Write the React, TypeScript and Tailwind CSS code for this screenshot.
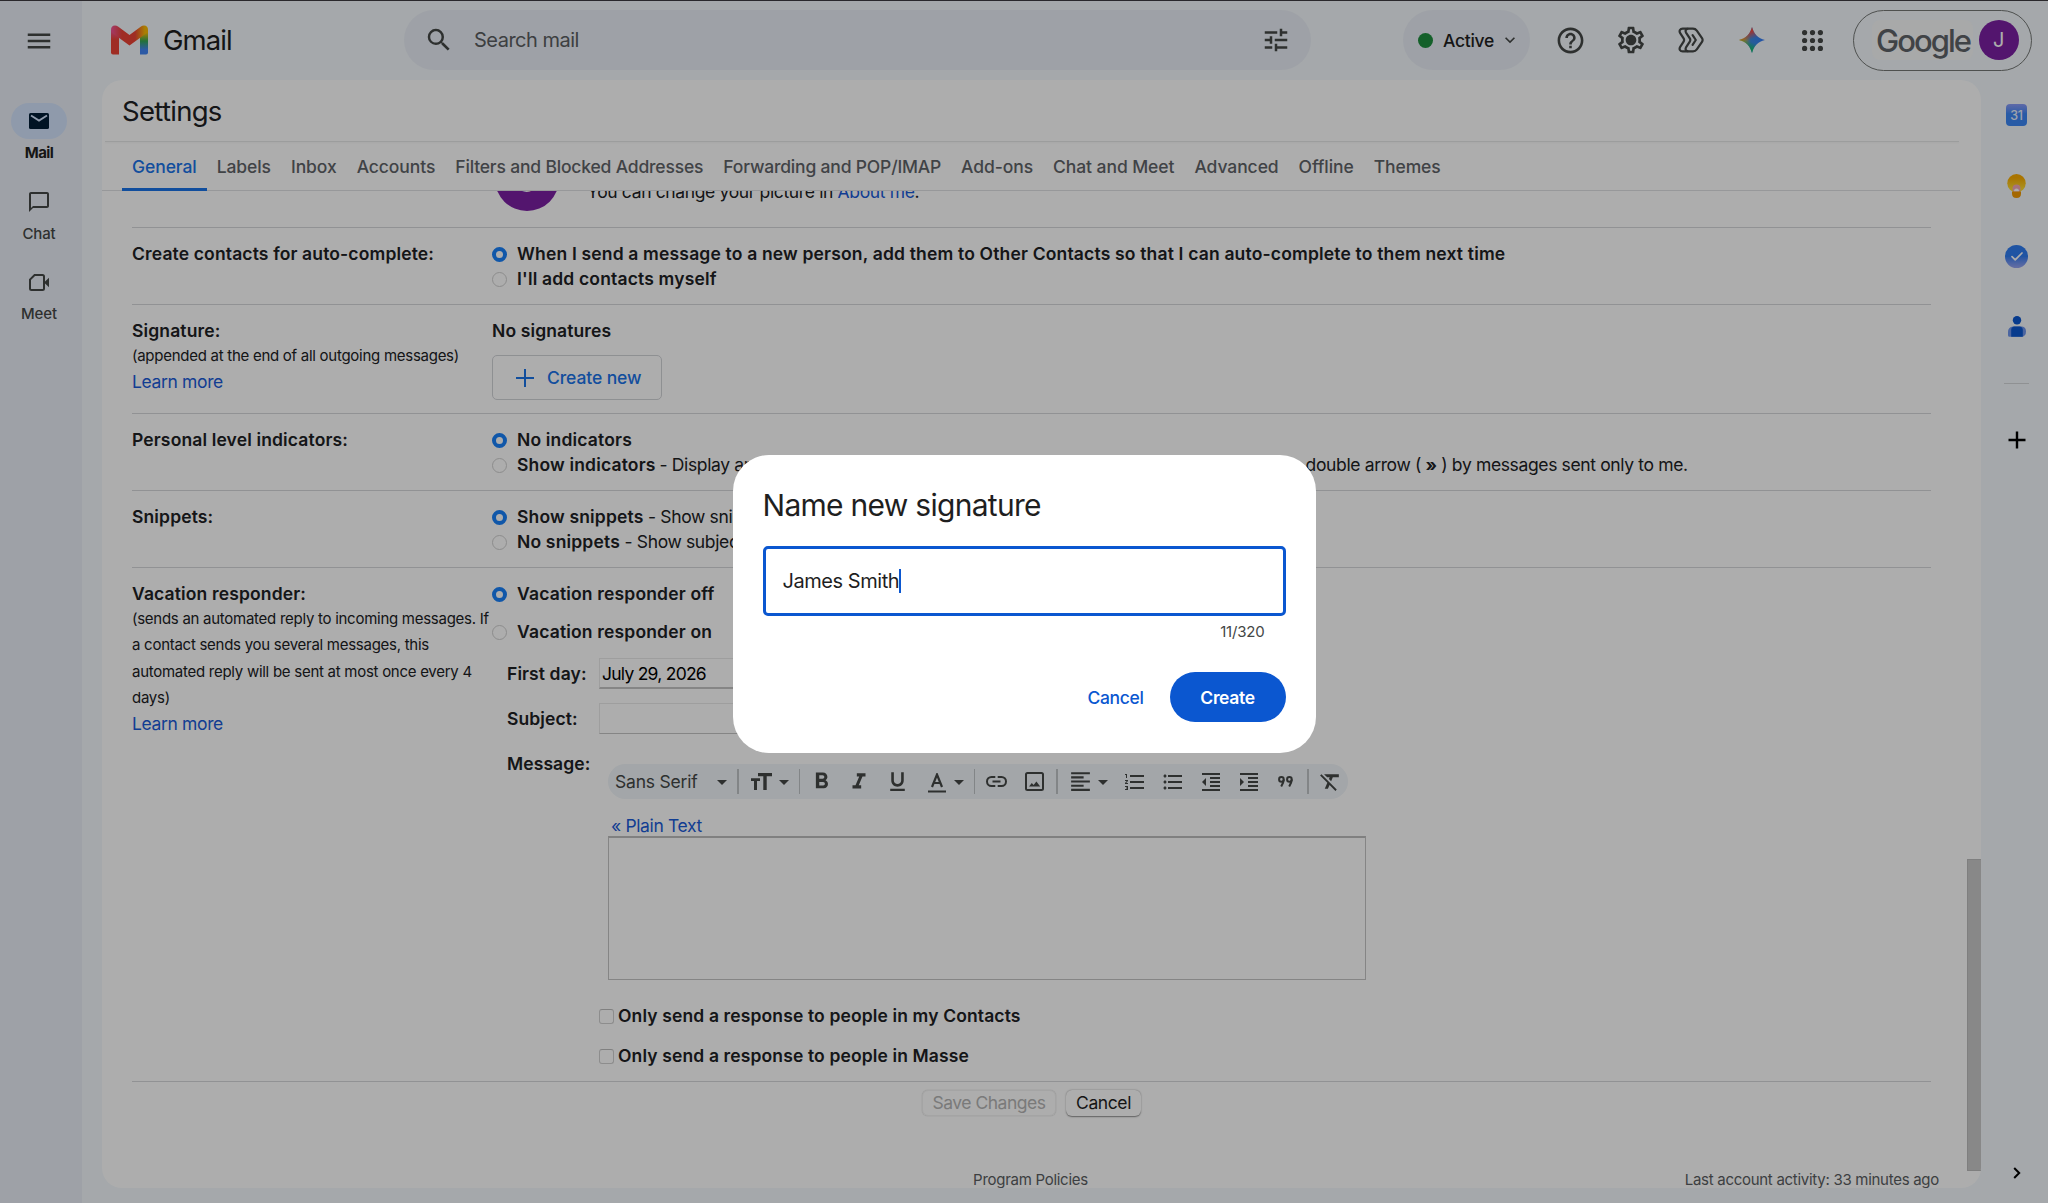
import type { ReactNode } from 'react';
import {
  MdArrowDropDown,
  MdChatBubbleOutline,
  MdFormatAlignLeft,
  MdFormatBold,
  MdFormatClear,
  MdFormatIndentDecrease,
  MdFormatIndentIncrease,
  MdFormatItalic,
  MdFormatListBulleted,
  MdFormatListNumbered,
  MdFormatUnderlined,
  MdHelpOutline,
  MdKeyboardArrowDown,
  MdMenu,
  MdOutlineSettings,
  MdSearch,
  MdTune,
} from 'react-icons/md';

const TABS = [
  'General',
  'Labels',
  'Inbox',
  'Accounts',
  'Filters and Blocked Addresses',
  'Forwarding and POP/IMAP',
  'Add-ons',
  'Chat and Meet',
  'Advanced',
  'Offline',
  'Themes',
];

export default function App() {
  return (
    <div className="relative flex h-[1203px] w-[2048px] overflow-hidden bg-[#f3f8fc] font-['Inter','Liberation_Sans',sans-serif] text-[17.5px] leading-[25px] tracking-[-0.36px] text-[#202124]">
      <NavRail />
      <div className="flex flex-1 flex-col">
        <Header />
        <div className="flex">
          <SettingsPanel />
          <SidePanel />
        </div>
      </div>

      {/* Scrim + dialog */}
      <div className="absolute inset-0 flex justify-center border-t border-[#2a282c] bg-black/32 pt-[454px]">
        <SignatureDialog />
      </div>
    </div>
  );
}

function NavRail() {
  return (
    <div className="flex w-[82px] flex-col items-center bg-[#e9eef6] pr-[4px] text-[#444746]">
      <div className="flex h-[103px] items-start pt-[26px]">
        <MdMenu className="size-[30px]" />
      </div>
      <div className="flex flex-col gap-[17.5px]">
        <NavItem label="Mail" active>
          <svg viewBox="0 0 20 16" className="h-[16px] w-[20px]">
            <rect width="20" height="16" rx="1.6" fill="#001d35" />
            <path d="M2 2.6l8 5 8-5" fill="none" stroke="#d3e3fd" strokeWidth="1.8" />
          </svg>
        </NavItem>
        <NavItem label="Chat">
          <MdChatBubbleOutline className="size-[24px]" />
        </NavItem>
        <NavItem label="Meet">
          <svg viewBox="0 0 20 17" className="h-[17px] w-[20px]">
            <path d="M5.6 1H13.5Q15 1 15 2.5V14.5Q15 16 13.5 16H2.5Q1 16 1 14.5V5.6Z" fill="none" stroke="currentColor" strokeWidth="2" />
            <path d="M15 8.5L20 3.8V13.2Z" fill="currentColor" />
          </svg>
        </NavItem>
      </div>
    </div>
  );
}

function NavItem({ label, active, children }: { label: string; active?: boolean; children: ReactNode }) {
  return (
    <div className="flex h-[63px] flex-col items-center">
      <div className={`flex h-[38px] w-[56px] items-center justify-center rounded-full ${active ? 'bg-[#d3e3fd]' : 'pt-[1px]'}`}>
        {children}
      </div>
      <span className={`pt-[1px] text-[15px] leading-[26px] ${active ? 'font-bold tracking-[-0.6px] text-[#1f1f1f]' : 'font-medium tracking-[-0.1px]'}`}>
        {label}
      </span>
    </div>
  );
}

function Header() {
  return (
    <div className="flex h-[80px] items-center text-[#444746]">
      <div className="flex w-[322px] items-center gap-[15px] pl-[29px]">
        <GmailLogo />
        <span className="text-[27.5px] leading-[40px] tracking-[-0.9px] text-[#1f1f1f]">Gmail</span>
      </div>

      <div className="flex h-[60px] w-[907px] items-center rounded-full bg-[#e9eef6] pr-[20px] pl-[20px]">
        <MdSearch className="size-[30px]" />
        <span className="ml-[20px] flex-1 text-[20px] tracking-[-0.5px] text-[#5a5d61]">Search mail</span>
        <MdTune className="size-[30px]" />
      </div>

      <div className="ml-[92px] flex h-[60px] w-[127px] items-center rounded-full bg-[#e9eef6] pl-[15px]">
        <span className="size-[15px] rounded-full bg-[#1e8e3e]" />
        <span className="ml-[10px] pt-[1px] font-medium tracking-[-0.3px] text-[#1f1f1f]">Active</span>
        <MdKeyboardArrowDown className="ml-[6px] size-[20px]" />
      </div>

      <div className="ml-[10px] flex">
        <HeaderIcon>
          <MdHelpOutline className="size-[31px]" />
        </HeaderIcon>
        <HeaderIcon>
          <svg viewBox="0 0 24 24" className="size-[32px]">
            <MdOutlineSettings size={24} />
            <circle cx="12" cy="12" r="3.4" fill="currentColor" />
          </svg>
        </HeaderIcon>
        <HeaderIcon>
          <svg viewBox="0 0 26 26" className="size-[26px]" fill="none" stroke="currentColor" strokeWidth="2.2" strokeLinejoin="round" strokeLinecap="round">
            <path d="M10.5 1.6H15Q17.4 1.6 18.8 3.6L24 11.2Q25.2 13 24 14.8L18.8 22.4Q17.4 24.4 15 24.4H10.5C8 24.4 7 22.4 8 20.4L11.8 14.6Q12.8 13 11.8 11.4L8 5.6C7 3.6 8 1.6 10.5 1.6Z" />
            <path d="M9.5 1.6H4.8C2 1.6 .8 4 2.2 6.2L5.6 11.4Q6.6 13 5.6 14.6L2.2 19.8C.8 22 2 24.4 4.8 24.4H9.5" />
            <path d="M14.6 8.2L17.8 13L14.6 17.8" />
          </svg>
        </HeaderIcon>
        <HeaderIcon>
          <GeminiStar />
        </HeaderIcon>
        <HeaderIcon>
          <svg viewBox="0 0 21 21" className="size-[21px]" fill="currentColor">
            {[2.6, 10.5, 18.4].map((y) => [2.6, 10.5, 18.4].map((x) => <circle key={`${x}-${y}`} cx={x} cy={y} r="2.6" />))}
          </svg>
        </HeaderIcon>
      </div>

      <div className="ml-[10px] flex h-[61px] w-[179px] items-center rounded-full border-[1.5px] border-[#747775] pl-[18px]">
        <div className="flex h-[40px] w-[101px] items-center justify-center rounded-[8px] bg-[#f8f9fa] pl-[2px] text-[31px] font-medium tracking-[-2px] text-[#5f6368]">
          Google
        </div>
        <div className="ml-[6px] flex size-[40px] items-center justify-center rounded-full bg-[#7b1fa2] text-[20px] text-white">J</div>
      </div>
    </div>
  );
}

function HeaderIcon({ children }: { children: ReactNode }) {
  return <div className="flex w-[60.5px] items-center justify-center">{children}</div>;
}

function GmailLogo() {
  return (
    <svg viewBox="0 0 37 30" className="h-[30px] w-[37px]">
      <defs>
        <linearGradient id="gm-left" x1="0" y1="0" x2="0" y2="1">
          <stop offset="0" stopColor="#f2559a" />
          <stop offset="0.4" stopColor="#ea4335" />
        </linearGradient>
        <linearGradient id="gm-right" x1="0" y1="0" x2="0" y2="1">
          <stop offset="0.1" stopColor="#fbbc04" />
          <stop offset="0.45" stopColor="#34a853" />
          <stop offset="0.8" stopColor="#4285f4" />
        </linearGradient>
        <linearGradient id="gm-mid" x1="0" y1="0" x2="1" y2="0">
          <stop offset="0" stopColor="#f2559a" />
          <stop offset="0.3" stopColor="#ea4335" />
          <stop offset="0.65" stopColor="#ea4335" />
          <stop offset="0.92" stopColor="#fbbc04" />
        </linearGradient>
      </defs>
      <path d="M0 5H8V29.5H2Q0 29.5 0 27.5Z" fill="url(#gm-left)" />
      <path d="M29 5H37V27.5Q37 29.5 35 29.5H29Z" fill="url(#gm-right)" />
      <path d="M0 5Q0 .5 4 .5Q5.6 .5 7 1.5L18.5 10L30 1.5Q31.4 .5 33 .5Q37 .5 37 5Q37 7 35 8.4L18.5 20.5L2 8.4Q0 7 0 5Z" fill="url(#gm-mid)" />
    </svg>
  );
}

function GeminiStar() {
  return (
    <svg viewBox="0 0 26 26" className="size-[26px]">
      <defs>
        <linearGradient id="gem-base" x1="0" y1="0.5" x2="1" y2="0.5">
          <stop offset="0.1" stopColor="#fbbc04" />
          <stop offset="0.45" stopColor="#3c8ae0" />
          <stop offset="1" stopColor="#3279f9" />
        </linearGradient>
        <linearGradient id="gem-top" x1="0.4" y1="0" x2="0.55" y2="0.45">
          <stop offset="0.35" stopColor="#f34b40" />
          <stop offset="1" stopColor="#f34b40" stopOpacity="0" />
        </linearGradient>
        <linearGradient id="gem-bottom" x1="0.4" y1="1" x2="0.55" y2="0.6">
          <stop offset="0.35" stopColor="#14bb69" />
          <stop offset="1" stopColor="#14bb69" stopOpacity="0" />
        </linearGradient>
      </defs>
      {['gem-base', 'gem-top', 'gem-bottom'].map((id) => (
        <path key={id} d="M13 0C14.8 7 19 11.2 26 13C19 14.8 14.8 19 13 26C11.2 19 7 14.8 0 13C7 11.2 11.2 7 13 0Z" fill={`url(#${id})`} />
      ))}
    </svg>
  );
}

function SettingsPanel() {
  return (
    <div className="ml-[20px] flex h-[1108px] w-[1879px] flex-col overflow-hidden rounded-[20px] bg-white">
      <div className="flex h-[61px] items-center pt-[1px] pl-[20px] text-[27.5px] tracking-[-0.7px]">Settings</div>
      <div className="mr-[22px] ml-[3px] h-px bg-[#e6e7e8] shadow-xs" />

      {/* Tabs */}
      <div className="mr-[21px] flex h-[49px] border-b border-[#dfe1e4] pl-[20px] font-medium tracking-[-0.08px] text-[#5f6368]">
        {TABS.map((tab, i) => (
          <div
            key={tab}
            className={`-mb-px flex items-center border-b-[3px] px-[10px] pt-[2px] whitespace-nowrap ${i === 0 ? 'border-[#1a73e8] text-[#1a73e8]' : 'border-transparent'} ${tab.length > 15 ? 'tracking-[-0.18px]' : ''}`}
          >
            {tab}
          </div>
        ))}
      </div>

      <div className="flex h-[997px] overflow-hidden">
        <div className="w-[1865px] pl-[30px]">
          <div className="flex h-[36px] w-[1799px] items-end pb-[16px] pl-[363px]">
            <div className="flex size-[64px] shrink-0 items-center justify-center rounded-full bg-[#7b1fa2] text-[34px] text-white">J</div>
            <p className="ml-[28px] pb-[7px]">
              You can change your picture in <span className="text-[#1a5bd7]">About me</span>.
            </p>
          </div>

          <SettingRow className="h-[77px]" title="Create contacts for auto-complete:">
            <Radio checked>
              <b className="font-semibold">When I send a message to a new person, add them to Other Contacts so that I can auto-complete to them next time</b>
            </Radio>
            <Radio>
              <b className="font-semibold">I'll add contacts myself</b>
            </Radio>
          </SettingRow>

          <SettingRow className="h-[109px]" title="Signature:" note="(appended at the end of all outgoing messages)" learnMore>
            <b className="font-semibold tracking-[0.12px]">No signatures</b>
            <div className="mt-[12px] flex h-[45px] w-[170px] items-center rounded-[5px] border border-[#d2d4d8] pl-[23px] font-medium tracking-[-0.1px] text-[#1a73e8]">
              <svg viewBox="0 0 18 18" className="mr-[13px] size-[18px]">
                <path d="M9 0V18M0 9H18" stroke="currentColor" strokeWidth="2" />
              </svg>
              Create new
            </div>
          </SettingRow>

          <SettingRow className="h-[77px]" title="Personal level indicators:">
            <Radio checked>
              <b className="font-semibold">No indicators</b>
            </Radio>
            <Radio>
              <b className="font-semibold">Show indicators</b>
              <span className="ml-[4px] inline-block w-[646px] overflow-hidden align-top">
                - Display an arrow ( › ) by messages sent to my address (not a list), and a
              </span>
              <span className="inline-block">double arrow ( <b>»</b> ) by messages sent only to me.</span>
            </Radio>
          </SettingRow>

          <SettingRow className="h-[77px]" title="Snippets:">
            <Radio checked>
              <b className="font-semibold">Show snippets</b> - Show snippets of the message
            </Radio>
            <Radio>
              <b className="font-semibold">No snippets</b> - Show subject only.
            </Radio>
          </SettingRow>

          <SettingRow
            className="h-[514px]"
            title="Vacation responder:"
            note={
              <>
                (sends an automated reply to incoming messages. If
                <br />a contact sends you several messages, this
                <br />
                automated reply will be sent at most once every 4
                <br />
                days)
              </>
            }
            learnMore
          >
            <VacationForm />
          </SettingRow>

          <div className="flex h-[89px] w-[1799px] items-start justify-center gap-[10px] border-t border-[#d6d8db] pt-[8px]">
            <button className="h-[26px] w-[134px] rounded-[6px] border border-[#f2f2f2] pb-[1px] leading-[23px] tracking-[-0.5px] text-[#b4b4b4] shadow-[0_0_1px_rgba(0,0,0,.35)]">
              Save Changes
            </button>
            <button className="h-[26px] w-[75px] rounded-[6px] pb-[1px] leading-[24px] tracking-[-0.4px] text-[#1f1f1f] shadow-[0_0.5px_1.5px_rgba(0,0,0,.45)]">
              Cancel
            </button>
          </div>

          <div className="ml-[-10px] grid w-[1817px] grid-cols-3 text-[15px] leading-[20px] tracking-[-0.28px] text-[#5a5d61]">
            <span className="col-start-2 text-center">Program Policies</span>
            <span className="text-right">Last account activity: 33 minutes ago</span>
          </div>
        </div>
        <div className="mt-[668px] h-[312px] w-[14px] border border-r-0 border-[#bcbcbc] bg-[#c9c9c9]" />
      </div>
    </div>
  );
}

type SettingRowProps = {
  title: string;
  note?: ReactNode;
  learnMore?: boolean;
  className: string;
  children: ReactNode;
};

function SettingRow({ title, note, learnMore, className, children }: SettingRowProps) {
  return (
    <div className={`grid w-[1799px] grid-cols-[360px_1fr] border-t border-[#d6d8db] pt-[13px] ${className}`}>
      <div className="whitespace-nowrap">
        <div className="font-semibold tracking-[0.14px]">{title}</div>
        {note && <div className="text-[15px] leading-[26.3px] tracking-[-0.27px]">{note}</div>}
        {learnMore && <div className="text-[#1a5bd7]">Learn more</div>}
      </div>
      <div className="whitespace-nowrap">{children}</div>
    </div>
  );
}

function Radio({ checked, children }: { checked?: boolean; children: ReactNode }) {
  return (
    <div className="flex h-[25px] items-center">
      <span
        className={`mt-[2px] mr-[10px] size-[15px] shrink-0 rounded-full ${checked ? 'border-[4.5px] border-[#1880fa] bg-white' : 'border border-[#cfcfcf] bg-white'}`}
      />
      <span className="[&>b]:tracking-[0.17px]">{children}</span>
    </div>
  );
}

function VacationForm() {
  return (
    <div>
      <Radio checked>
        <b className="font-semibold">Vacation responder off</b>
      </Radio>
      <div className="mt-[13px]">
        <Radio>
          <b className="font-semibold">Vacation responder on</b>
        </Radio>
      </div>

      <div className="mt-[14px] grid grid-cols-[92px_1fr] pl-[15px]">
        <b className="leading-[31px] font-semibold tracking-[0.1px]">First day:</b>
        <div className="h-[31px] w-[230px] border border-b-2 border-[#e9e9e9] border-b-[#c4c4c4] pl-[2px] leading-[30px] tracking-[-0.75px] text-black">
          July 29, 2026
        </div>
        <b className="mt-[14px] leading-[31px] font-semibold tracking-[0.1px]">Subject:</b>
        <div className="mt-[14px] h-[31px] w-[600px] border border-[#e9e9e9] border-b-[#c4c4c4]" />
        <b className="mt-[17px] font-semibold tracking-[0.1px]">Message:</b>
        <div className="mt-[30px] pl-[9px]">
          <FormatToolbar />
          <div className="mt-[16px] pl-[3px] leading-[22px] text-[#1a5bd7]">« Plain Text</div>
          <div className="-mt-px h-[144px] w-[758px] border border-t-2 border-[#c4c4c4] border-t-[#bdbdbd]" />
        </div>
      </div>

      <Checkbox className="mt-[23px]">Only send a response to people in my Contacts</Checkbox>
      <Checkbox className="mt-[15px]">Only send a response to people in Masse</Checkbox>
    </div>
  );
}

function Checkbox({ className, children }: { className: string; children: ReactNode }) {
  return (
    <div className={`flex h-[25px] items-center pl-[107px] font-semibold tracking-[0.13px] ${className}`}>
      <span className="mt-[2px] mr-[4px] size-[15px] rounded-[3px] border border-[#d0d0d0] border-t-[#bdbdbd]" />
      {children}
    </div>
  );
}

function FormatToolbar() {
  return (
    <div className="flex h-[35px] w-[740px] items-center rounded-full bg-[#f0f5f9] text-[#444746]">
      <span className="w-[98px] pl-[7px] tracking-[-0.2px]">Sans Serif</span>
      <MdArrowDropDown className="ml-[4px] size-[24px]" />
      <Divider className="ml-[3px]" />
      <svg viewBox="0 0 21 17" className="ml-[12px] h-[17px] w-[21px]" fill="currentColor">
        <path d="M7 0H21V3.2H15.7V17H12.3V3.2H7ZM0 5.2H9V8H6V17H3V8H0Z" />
      </svg>
      <MdArrowDropDown className="size-[24px]" />
      <Divider className="ml-[3px]" />
      <MdFormatBold className="ml-[8px] size-[27px]" />
      <MdFormatItalic className="ml-[11px] size-[26px]" />
      <MdFormatUnderlined className="ml-[13px] size-[25px]" />
      <svg viewBox="0 0 18 20" className="mt-[2px] ml-[17.5px] h-[20px] w-[18px]">
        <path d="M4 14L9 1.5L14 14M5.8 10H12.2" fill="none" stroke="currentColor" strokeWidth="2.2" />
        <path d="M0 18.5H18" stroke="currentColor" strokeWidth="2" />
      </svg>
      <MdArrowDropDown className="ml-[1px] size-[24px]" />
      <Divider className="ml-[3px]" />
      <svg viewBox="0 0 21 11" className="ml-[11px] h-[11px] w-[21px]" fill="none" stroke="currentColor" strokeWidth="2">
        <path d="M9.3 1H5.5A4.5 4.5 0 0 0 5.5 10H9.3M11.7 1H15.5A4.5 4.5 0 0 1 15.5 10H11.7M6.5 5.5H14.5" />
      </svg>
      <svg viewBox="0 0 19 19" className="ml-[17.5px] size-[19px]">
        <rect x="1" y="1" width="17" height="17" rx="1.5" fill="none" stroke="currentColor" strokeWidth="2" />
        <path d="M4 14.5L6.8 11L8.6 13L11.4 9.5L15.2 14.5Z" fill="currentColor" />
      </svg>
      <Divider className="ml-[12.5px]" />
      <MdFormatAlignLeft className="ml-[10px] size-[25px]" />
      <MdArrowDropDown className="-ml-[2px] size-[24px]" />
      <MdFormatListNumbered className="ml-[8.5px] size-[24px]" />
      <MdFormatListBulleted className="ml-[14px] size-[24px]" />
      <MdFormatIndentDecrease className="ml-[14px] size-[24px]" />
      <MdFormatIndentIncrease className="ml-[14px] size-[24px]" />
      <svg viewBox="0 0 15 11" className="ml-[17px] h-[11px] w-[15px]" fill="none" stroke="currentColor" strokeWidth="2">
        <circle cx="3.4" cy="3.4" r="2.3" />
        <path d="M5.8 3.6Q5.8 6 3.2 10.4" />
        <circle cx="11.4" cy="3.4" r="2.3" />
        <path d="M13.8 3.6Q13.8 6 11.2 10.4" />
      </svg>
      <Divider className="ml-[14px]" />
      <MdFormatClear className="ml-[9px] size-[25px]" />
    </div>
  );
}

function Divider({ className }: { className: string }) {
  return <span className={`h-[25px] w-[1.5px] shrink-0 bg-[#c0c4c8] ${className}`} />;
}

function SidePanel() {
  return (
    <div className="flex h-[1123px] flex-1 flex-col items-center pl-[4px]">
      <SideIcon>
        <div className="flex h-[22px] w-[21px] items-center justify-center rounded-[4px] bg-linear-to-b from-[#8a9cf8] to-[#3b86f5] to-45% text-[12.5px] font-medium text-[#e8f0fe]">
          31
        </div>
      </SideIcon>
      <SideIcon>
        <svg viewBox="0 0 19 24" className="h-[24px] w-[19px]">
          <defs>
            <linearGradient id="keep" x1="0" y1="0" x2="0" y2="1">
              <stop offset="0.2" stopColor="#f9ab00" />
              <stop offset="0.8" stopColor="#fcd934" />
            </linearGradient>
          </defs>
          <circle cx="9.5" cy="9.3" r="9.2" fill="url(#keep)" />
          <circle cx="9.5" cy="14.6" r="4" fill="#f5a9b8" />
          <path d="M7 17.5Q7 14.5 9.5 14.5Q12 14.5 12 17.5Z" fill="#fff" />
          <path d="M5 17.5H14V19.5Q14 24 9.5 24Q5 24 5 19.5Z" fill="#f29900" />
        </svg>
      </SideIcon>
      <SideIcon>
        <div className="flex size-[23px] items-center justify-center rounded-full bg-linear-to-b from-[#2f7cf0] from-50% to-[#97a3f0]">
          <svg viewBox="0 0 12 9" className="h-[9px] w-[12px]">
            <path d="M1 4.6L4.2 7.8L11 1" fill="none" stroke="#fff" strokeWidth="1.7" strokeLinecap="round" strokeLinejoin="round" />
          </svg>
        </div>
      </SideIcon>
      <SideIcon>
        <svg viewBox="0 0 18 21" className="h-[21px] w-[18px]">
          <circle cx="9" cy="4.2" r="4.2" fill="#0b57d0" />
          <path d="M5 10.5H14Q18 11 18 15.5T14 20.8H1Q0 20.8 0 19V16Q0 11 5 10.5Z" fill="#6f95ec" />
          <path d="M6 10.5H12Q14.8 11 14.8 14V20.8H3.2V14Q3.2 11 6 10.5Z" fill="#0b57d0" />
        </svg>
      </SideIcon>
      <div className="mt-[21px] h-px w-[25px] bg-[#d3d6d9]" />
      <svg viewBox="0 0 18 18" className="mt-[47px] size-[18px]">
        <path d="M9 0.5V17.5M0.5 9H17.5" stroke="#000" strokeWidth="2.4" />
      </svg>
      <svg viewBox="0 0 8 12" className="mt-auto mb-[24px] h-[12px] w-[8px]">
        <path d="M1.2 1L6.2 6L1.2 11" fill="none" stroke="#000" strokeWidth="2" />
      </svg>
    </div>
  );
}

function SideIcon({ children }: { children: ReactNode }) {
  return <div className="flex h-[70.5px] shrink-0 items-center">{children}</div>;
}

function SignatureDialog() {
  return (
    <div className="h-[298px] w-[583px] rounded-[36px] bg-white px-[30px] pt-[30px]">
      <h2 className="text-[30px] leading-[40px] tracking-[-0.72px] text-[#1f1f1f]">Name new signature</h2>
      <div className="mt-[21px] flex h-[70px] items-center rounded-[5px] border-[3.5px] border-[#0b57d0] pl-[17px] text-[20px] tracking-[-0.45px] text-[#1f1f1f]">
        James Smith
        <span className="h-[24px] w-[2px] bg-[#0b57d0]" />
      </div>
      <div className="mt-[6px] pr-[21px] text-right text-[15px] leading-[20px] tracking-[-0.2px] text-[#444746]">11/320</div>
      <div className="mt-[30px] flex items-center justify-end font-medium tracking-[-0.35px]">
        <span className="mr-[26px] text-[#0b57d0]">Cancel</span>
        <button className="h-[50px] w-[116px] rounded-full bg-[#0b57d0] font-semibold text-white">Create</button>
      </div>
    </div>
  );
}
